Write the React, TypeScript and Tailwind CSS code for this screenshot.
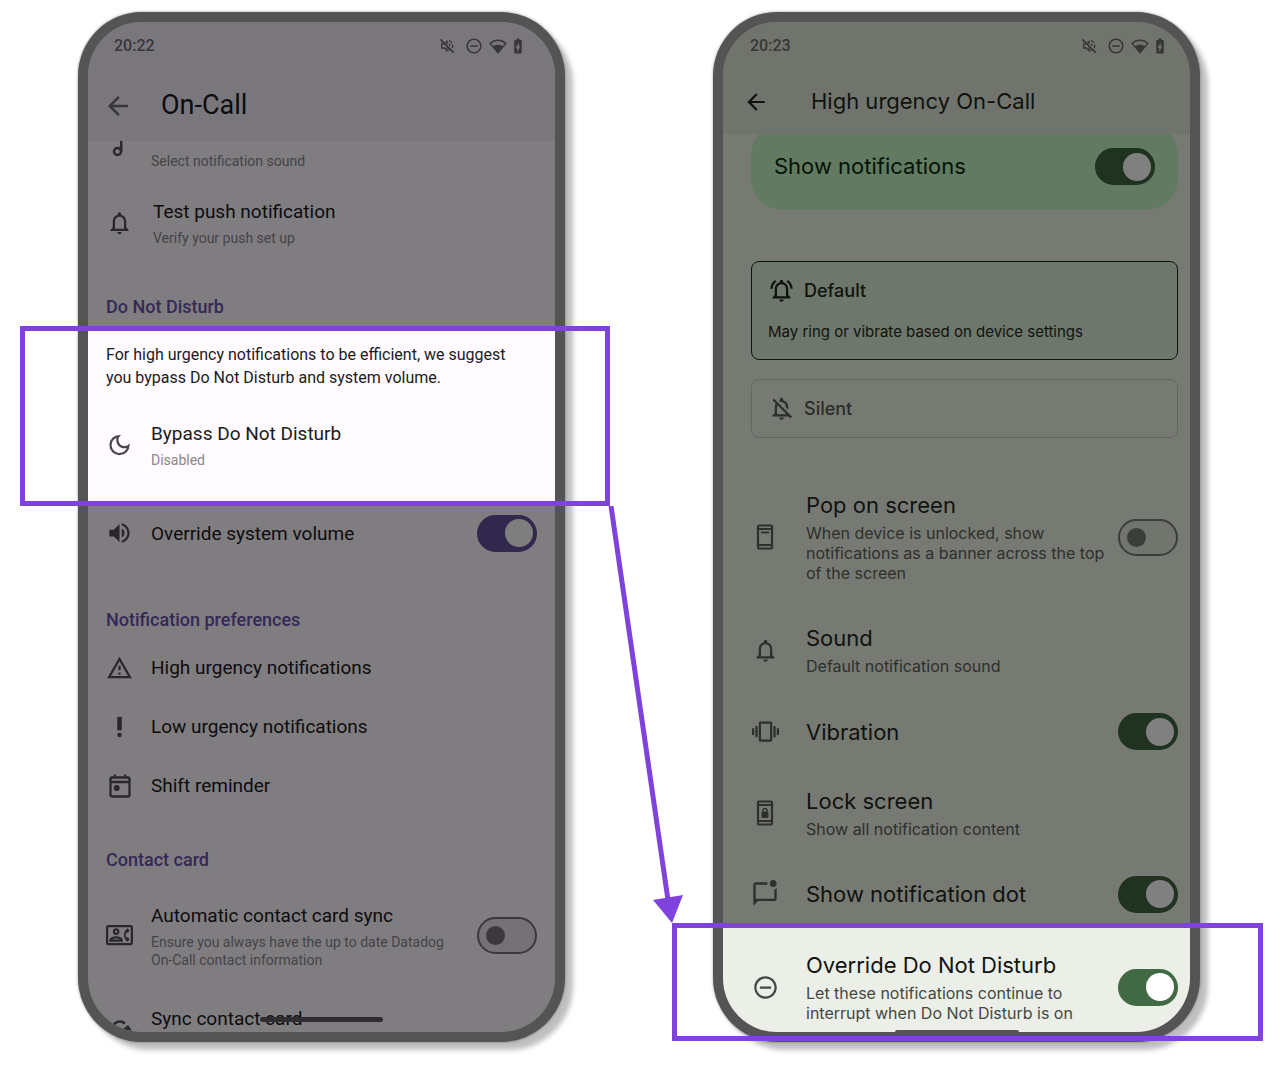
import React from "react";
import {
  MdArrowBack,
  MdBatteryChargingFull,
  MdOutlineContactPhone,
  MdOutlineDarkMode,
  MdOutlineDoNotDisturbOn,
  MdOutlineMarkChatUnread,
  MdOutlineNotifications,
  MdOutlineNotificationsActive,
  MdOutlineNotificationsOff,
  MdOutlineWarningAmber,
  MdPriorityHigh,
  MdVibration,
  MdVolumeUp,
} from "react-icons/md";

function MutedIcon() {
  return (
    <svg viewBox="0 0 24 24" className="size-4" fill="none" stroke="currentColor" strokeWidth="2">
      <path d="M2 2l20 20" strokeWidth="2.4" />
      <path d="M7.500 9H4v6h4l4 4v-5M9.500 7L12 5v4" />
      <path d="M15 8.500a4 4 0 0 1 1.500 3.500M15 4c2 .7 3.500 1.900 4.500 3.500M20.500 10c.3 2 .1 3.500-.6 5M15 15.500v3.500" />
    </svg>
  );
}

function WifiIcon() {
  return (
    <svg viewBox="0 0 24 20" className="h-4 w-[18px]">
      <path d="M1.500 6.500C7.500.8 16.500.8 22.500 6.500L12 19z" fill="none" stroke="currentColor" strokeWidth="1.900" />
      <path d="M5 10.500C9 7.500 15 7.500 19 10.500L12 19z" fill="currentColor" />
    </svg>
  );
}

function NoteIcon() {
  return (
    <svg viewBox="0 0 12 16" className="h-4 w-3" fill="none" stroke="currentColor" strokeWidth="2.500">
      <circle cx="5.500" cy="10.500" r="3.500" />
      <path d="M9.200 0v11" />
    </svg>
  );
}

function CalendarIcon() {
  return (
    <svg viewBox="0 0 24 26" className="h-[26px] w-6" fill="none" stroke="currentColor" strokeWidth="2.300">
      <rect x="2.500" y="4.500" width="19" height="19" rx="1.500" />
      <path d="M2.500 9h19M6.800 1.500v3M17.200 1.500v3" />
      <circle cx="8.700" cy="15" r="3" fill="currentColor" stroke="none" />
    </svg>
  );
}

function SyncIcon() {
  return (
    <svg viewBox="0 0 24 24" className="size-6" fill="none" stroke="currentColor" strokeWidth="2.400">
      <path d="M4 17.500A8.500 8.500 0 0 1 4.500 7.500C7.500 2 13 1 17 4.500" />
      <path d="M14.500 10.500L20 6l4 5.500z" fill="currentColor" stroke="none" />
    </svg>
  );
}

function PhoneIcon({ locked = false }: { locked?: boolean }) {
  return (
    <svg viewBox="0 0 18 26" className="h-[26px] w-[18px]" fill="none" stroke="currentColor" strokeWidth="2.200">
      <rect x="2" y="1.500" width="14" height="23" rx="1" />
      <path d="M2 5h14M2 21h14" strokeWidth="2" />
      {locked ? (
        <>
          <rect x="5.500" y="11.500" width="7" height="6.500" rx="1" fill="currentColor" stroke="none" />
          <path d="M7 12v-1.500a2 2 0 0 1 4 0V12" strokeWidth="1.400" />
        </>
      ) : (
        <path d="M5 8.500h8" strokeWidth="1.800" />
      )}
    </svg>
  );
}

const SWITCH_STYLES = {
  violet: "border-[#33294f] bg-[#33294f] before:bg-[#7f7e7f]",
  green: "border-[#203321] bg-[#203321] before:bg-[#818081]",
  bright: "border-[#416943] bg-[#416943] before:bg-white",
  offViolet: "border-[#3b393d] bg-[#747177] before:bg-[#3b393d]",
  offGreen: "border-[#3b3e39] bg-[#72746e] before:bg-[#3b3e39]",
};

function Switch({ look, label }: { look: keyof typeof SWITCH_STYLES; label: string }) {
  const on = look === "violet" || look === "green" || look === "bright";
  return (
    <input
      type="checkbox"
      role="switch"
      aria-label={label}
      defaultChecked={on}
      className={`flex h-[37px] w-[60px] shrink-0 appearance-none items-center rounded-full border-2 before:rounded-full ${
        on ? "justify-end pr-[2px] before:size-7" : "pl-[7px] before:size-[19px]"
      } ${SWITCH_STYLES[look]}`}
    />
  );
}

function StatusBar({ time, pad }: { time: string; pad: string }) {
  return (
    <div className={`flex h-12 items-center justify-between ${pad}`}>
      <span className="text-[16px] font-medium">{time}</span>
      <span className="flex items-center">
        <MutedIcon />
        <MdOutlineDoNotDisturbOn className="ml-[10px] size-[18px]" />
        <span className="ml-[6px]">
          <WifiIcon />
        </span>
        <MdBatteryChargingFull className="ml-[2px] size-[18px]" />
      </span>
    </div>
  );
}

function Phone({ screen, children, overlay }: { screen: string; children: React.ReactNode; overlay: React.ReactNode }) {
  return (
    <div className="relative min-w-0 flex-1">
      <div className="rounded-[64px] bg-[#545454] p-[10px] shadow-[8px_8px_5px_rgba(0,0,0,0.25),0_0_3px_rgba(0,0,0,0.4)]">
        <div className={`overflow-hidden rounded-[54px] ${screen}`}>{children}</div>
      </div>
      {overlay}
    </div>
  );
}

function AppRow({
  icon,
  title,
  look,
  height,
}: {
  icon: React.ReactNode;
  title: string;
  look?: keyof typeof SWITCH_STYLES;
  height: string;
}) {
  const Tag = look ? "div" : "button";
  return (
    <Tag className={`flex w-full items-center text-left ${height}`}>
      <span className="flex w-[27px] shrink-0 justify-center text-[#29272b]">{icon}</span>
      <span className="ml-[18px] min-w-0 flex-1 text-[19px] leading-[27px]">{title}</span>
      {look && <Switch look={look} label={title} />}
    </Tag>
  );
}

function Heading({ pad, children }: { pad: string; children: string }) {
  return <h2 className={`text-[18px] font-medium leading-[26px] text-[#342955] ${pad}`}>{children}</h2>;
}

function OnCallScreen() {
  return (
    <div className="text-[#0d0c0e]">
      <header className="h-[119px] bg-[#7a777c]">
        <div className="text-[#38363a]">
          <StatusBar time="20:22" pad="pl-[26px] pr-[28px]" />
        </div>
        <div className="flex h-[71px] items-center pl-[15px]">
          <button aria-label="Back" className="text-[#38363a]">
            <MdArrowBack className="size-[30px]" />
          </button>
          <h1 className="ml-[28px] text-[27px]">On-Call</h1>
        </div>
      </header>

      <div className="px-[18px]">
        <div className="flex h-[35px]">
          <span className="flex w-[27px] justify-center pr-[4px] text-[#29272b]">
            <NoteIcon />
          </span>
          <span className="ml-[18px] text-[14px] leading-[40px] text-[#454347]">Select notification sound</span>
        </div>
        <button className="flex h-[98px] w-full items-center text-left">
          <span className="flex w-[27px] justify-center pb-1 text-[#29272b]">
            <MdOutlineNotifications className="size-[28px]" />
          </span>
          <span className="ml-5">
            <span className="block text-[19px] leading-[27px]">Test push notification</span>
            <span className="block text-[14px] leading-[27px] text-[#454347]">Verify your push set up</span>
          </span>
        </button>
        <Heading pad="pt-5 pb-2">Do Not Disturb</Heading>
      </div>

      <section className="bg-[#fffbff] px-[18px] pb-2 pt-[15px] text-[#1b1a1d]">
        <p className="text-[16px] leading-[23px]">
          For high urgency notifications to be efficient, we suggest
          <br />
          you bypass Do Not Disturb and system volume.
        </p>
        <button className="mt-[9px] flex h-[98px] w-full items-center text-left">
          <span className="flex w-[27px] justify-center pb-1 text-[#48454c]">
            <MdOutlineDarkMode className="size-[28px]" />
          </span>
          <span className="ml-[18px]">
            <span className="block text-[19px] leading-[27px]">Bypass Do Not Disturb</span>
            <span className="block text-[14px] leading-[27px] text-[#89878c]">Disabled</span>
          </span>
        </button>
      </section>

      <div className="px-[18px]">
        <AppRow height="h-[58px]" icon={<MdVolumeUp className="size-[28px]" />} title="Override system volume" look="violet" />
        <Heading pad="pt-[45px] pb-[5px]">Notification preferences</Heading>
        <AppRow height="h-[59px]" icon={<MdOutlineWarningAmber className="size-[28px]" />} title="High urgency notifications" />
        <AppRow height="h-[59px]" icon={<MdPriorityHigh className="size-[28px]" />} title="Low urgency notifications" />
        <AppRow height="h-[59px]" icon={<CalendarIcon />} title="Shift reminder" />
        <Heading pad="pt-[32px]">Contact card</Heading>
        <div className="flex h-[124px] items-center">
          <span className="flex w-[27px] shrink-0 justify-center text-[#29272b]">
            <MdOutlineContactPhone className="size-[28px]" />
          </span>
          <span className="ml-[18px] min-w-0 flex-1">
            <span className="block text-[19px] leading-[27px]">Automatic contact card sync</span>
            <span className="mt-1 block text-[14px] leading-[18px] text-[#454347]">
              Ensure you always have the up to date Datadog
              <br />
              On-Call contact information
            </span>
          </span>
          <Switch look="offViolet" label="Automatic contact card sync" />
        </div>
        <div className="relative flex h-[35px] overflow-hidden">
          <span className="flex w-[27px] justify-center pt-[22px] text-[#29272b]">
            <SyncIcon />
          </span>
          <span className="ml-[18px] pt-2 text-[19px] leading-[27px]">Sync contact card</span>
          <span className="absolute inset-x-0 top-5 mx-auto h-[5px] w-[123px] rounded-full bg-[#2f2d30]" />
        </div>
      </div>
    </div>
  );
}

function SettingRow({
  icon,
  title,
  lines,
  look,
  pad,
  tone = "text-[#2d302b]",
}: {
  icon: React.ReactNode;
  title: string;
  lines?: string[];
  look?: keyof typeof SWITCH_STYLES;
  pad: string;
  tone?: string;
}) {
  const Tag = look ? "div" : "button";
  return (
    <Tag className={`flex w-full items-center pl-[28px] pr-3 text-left ${pad}`}>
      <span className={`flex w-[28px] shrink-0 justify-center ${tone}`}>{icon}</span>
      <span className="ml-[27px] min-w-0 flex-1">
        <span className="block text-[22px] leading-[28px]">{title}</span>
        {lines && (
          <span className={`mt-1 block whitespace-nowrap text-[16px] leading-5 ${tone}`}>
            {lines.map((line) => (
              <span key={line} className="block">
                {line}
              </span>
            ))}
          </span>
        )}
      </span>
      {look && <Switch look={look} label={title} />}
    </Tag>
  );
}

function UrgencyScreen() {
  return (
    <div className="font-['Inter',sans-serif] text-[#10130f]">
      <header className="h-[112px] bg-[#71736d]">
        <div className="font-['Roboto',sans-serif] text-[#363834]">
          <StatusBar time="20:23" pad="pl-[27px] pr-[21px]" />
        </div>
        <div className="flex h-[63px] items-center pl-5">
          <button aria-label="Back">
            <MdArrowBack className="size-[26px]" />
          </button>
          <h1 className="ml-[42px] text-[22px]">High urgency On-Call</h1>
        </div>
      </header>

      <div className="overflow-hidden pl-[28px] pr-3">
        <div className="-mt-[11px] flex h-[87px] items-center justify-between rounded-[32px] bg-[#617a61] px-[23px] text-[#041306]">
          <span className="text-[22px]">Show notifications</span>
          <Switch look="green" label="Show notifications" />
        </div>
        <button className="mt-[51px] block h-[99px] w-full rounded-lg border border-[#0c140d] bg-[#6d776b] px-4 pb-[3px] text-left">
          <span className="flex items-center">
            <MdOutlineNotificationsActive className="size-[27px]" />
            <span className="ml-[9px] text-[18px] font-medium">Default</span>
          </span>
          <span className="mt-[18px] block text-[15px] leading-5">May ring or vibrate based on device settings</span>
        </button>
        <button className="mt-[19px] flex h-[59px] w-full items-center rounded-lg border border-[#646760] px-4 text-left text-[#2b2e29]">
          <MdOutlineNotificationsOff className="size-[27px]" />
          <span className="ml-[9px] text-[18px] font-medium">Silent</span>
        </button>
      </div>

      <SettingRow
        pad="pt-[53px] pb-[26px]"
        icon={<PhoneIcon />}
        title="Pop on screen"
        lines={["When device is unlocked, show", "notifications as a banner across the top", "of the screen"]}
        look="offGreen"
      />
      <SettingRow
        pad="py-[15px]"
        icon={<MdOutlineNotifications className="size-[27px]" />}
        title="Sound"
        lines={["Default notification sound"]}
      />
      <SettingRow pad="h-[81px]" icon={<MdVibration className="size-[27px]" />} title="Vibration" look="green" />
      <SettingRow
        pad="py-[15px]"
        icon={<PhoneIcon locked />}
        title="Lock screen"
        lines={["Show all notification content"]}
      />
      <SettingRow
        pad="h-[71px] pt-[9px]"
        icon={<MdOutlineMarkChatUnread className="size-[28px]" />}
        title="Show notification dot"
        look="green"
      />
      <div className="relative bg-[#ecefe8]">
        <SettingRow
          pad="pt-[26px] pb-[9px]"
          icon={<MdOutlineDoNotDisturbOn className="size-[27px]" />}
          title="Override Do Not Disturb"
          lines={["Let these notifications continue to", "interrupt when Do Not Disturb is on"]}
          look="bright"
          tone="text-[#434841]"
        />
        <span className="absolute inset-x-0 bottom-0 mx-auto h-[2px] w-[124px] rounded-t-full bg-[#545454]" />
      </div>
    </div>
  );
}

export default function App() {
  return (
    <main className="min-h-screen overflow-hidden bg-white pb-[34px] pl-[78px] pr-[88px] pt-3 font-['Roboto',sans-serif]">
      <div className="flex gap-[148px]">
        <Phone
          screen="bg-[#807d80]"
          overlay={
            <>
              <div className="pointer-events-none absolute -left-[58px] -right-[45px] top-[314px] h-[180px] border-[5px] border-[#7f42dc]" />
              <svg viewBox="0 0 80 420" className="pointer-events-none absolute -right-[120px] top-[494px] h-[420px] w-[80px]">
                <path d="M6 0L63 394" stroke="#7f42dc" strokeWidth="5" />
                <path d="M48 394L78 389L67 417z" fill="#7f42dc" />
              </svg>
            </>
          }
        >
          <OnCallScreen />
        </Phone>
        <Phone
          screen="bg-[#777973]"
          overlay={
            <div className="pointer-events-none absolute -left-[41px] -right-[63px] top-[911px] h-[118px] border-[5px] border-[#7f42dc]" />
          }
        >
          <UrgencyScreen />
        </Phone>
      </div>
    </main>
  );
}
